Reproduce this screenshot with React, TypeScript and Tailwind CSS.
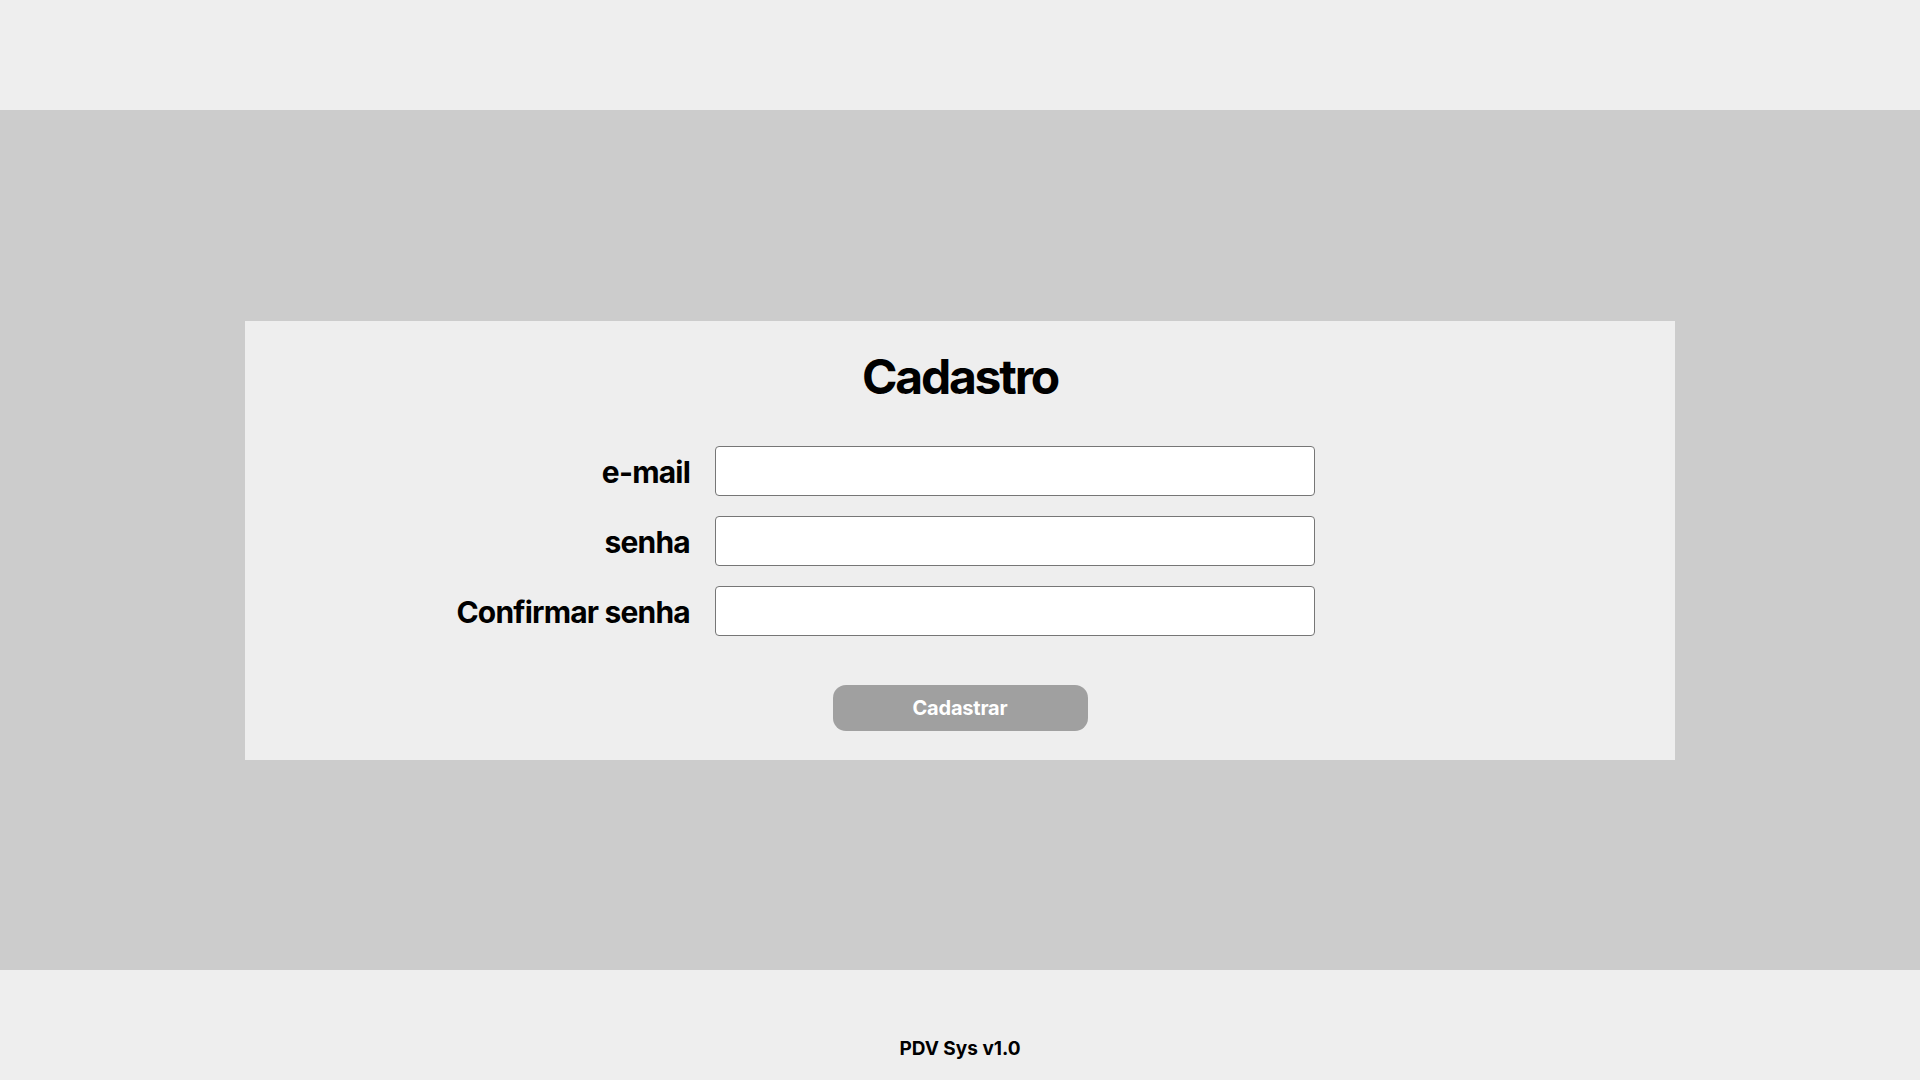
import { useState } from 'react';

const fields = [
  { id: 'email', label: 'e-mail', type: 'email' },
  { id: 'senha', label: 'senha', type: 'password' },
  { id: 'confirmar', label: 'Confirmar senha', type: 'password' },
];

export default function App() {
  const [values, setValues] = useState<Record<string, string>>({});

  return (
    <div className="min-h-screen flex flex-col bg-[#eeeeee] text-black font-['Inter',sans-serif]">
      {/* Top bar */}
      <header className="h-[110px] bg-[#eeeeee]" />

      {/* Main area */}
      <main className="h-[860px] bg-[#cccccc] flex items-center justify-center">
        <section className="w-[1430px] bg-[#eeeeee] pt-[32px] pb-[29px] flex flex-col items-center">
          <h1 className="text-[48px] leading-[48px] font-bold tracking-[-2.2px]">Cadastro</h1>

          <form
            className="w-full mt-[45px] grid grid-cols-[445px_600px] gap-x-[25px] gap-y-[20px] items-center"
            onSubmit={(e) => e.preventDefault()}
          >
            {fields.map((f) => (
              <div key={f.id} className="contents">
                <label htmlFor={f.id} className="text-right text-[30px] leading-[36px] font-bold tracking-[-0.8px] pt-[2px]">
                  {f.label}
                </label>
                <input
                  id={f.id}
                  type={f.type}
                  value={values[f.id] ?? ''}
                  onChange={(e) => setValues({ ...values, [f.id]: e.target.value })}
                  className="h-[50px] bg-white border border-[#767676] rounded-[4px] px-3 text-[20px] outline-none"
                />
              </div>
            ))}
          </form>

          <button
            type="button"
            className="mt-[49px] w-[255px] h-[46px] rounded-[13px] bg-[#a0a0a0] text-white text-[20px] font-bold tracking-[-0.2px]"
          >
            Cadastrar
          </button>
        </section>
      </main>

      {/* Footer */}
      <footer className="h-[110px] bg-[#eeeeee] flex justify-center pt-[65px]">
        <span className="text-[19px] leading-[28px] font-bold">PDV Sys v1.0</span>
      </footer>
    </div>
  );
}
